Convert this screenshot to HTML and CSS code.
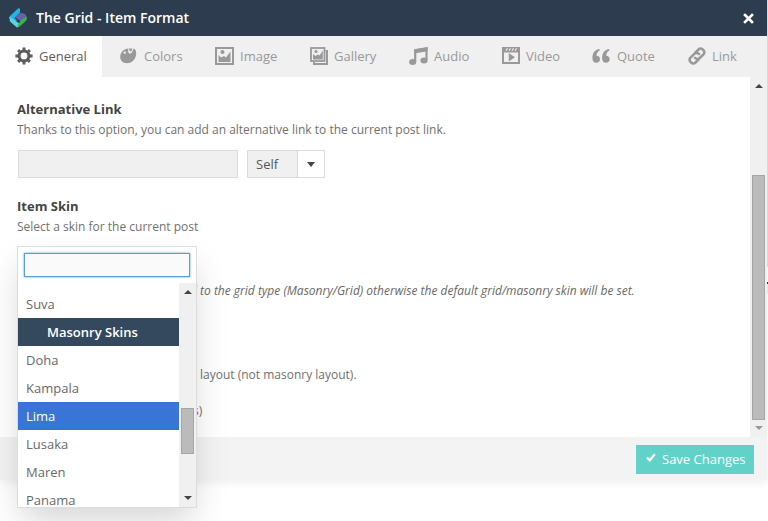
FILE: index.html
```html
<!DOCTYPE html>
<html lang="en">
<head>
<meta charset="utf-8">
<title>The Grid - Item Format</title>
<link rel="stylesheet" href="styles.css">
</head>
<body>
<div class="modal">
  <header class="header">
    <svg class="logo" width="20" height="20" viewBox="0 0 20 20">
      <path d="M10 .4Q12 -.4 12 1.600V4.500L6.500 10L9 12.500L6 15L2 11.500Q.5 9.800 2 8Z" fill="#20b4e8"/>
      <path d="M2 11.500Q.8 10 1.500 8.800L12 16L10.500 19Q9.300 20 8 18.800L2.500 14Q1 12.500 2 11.500Z" fill="#5ad5dc"/>
      <path d="M7.500 9L10.500 6Q12 4.700 14 5L17 6Q19 8 18.500 10L12.500 13Q8 10.500 7.500 9Z" fill="#6661a8"/>
      <path d="M18.700 8.500Q19.500 11 17.800 13L11.500 18.800Q10 19.500 9.500 18L12.500 12.500Z" fill="#35b44b"/>
    </svg>
    <h1 class="title">The Grid - Item Format</h1>
    <svg class="close" width="11" height="11" viewBox="0 0 11 11"><path d="M2 2L9 9M9 2L2 9" stroke="#fff" stroke-width="2.600" stroke-linecap="square"/></svg>
  </header>

  <nav class="tabs">
    <div class="tab active">
      <svg class="icon" width="18" height="18" viewBox="0 0 18 18"><circle cx="9" cy="9" r="4.900" fill="none" stroke="currentColor" stroke-width="3"/><path d="M9 .4V4M9 14V17.600M.4 9H4M14 9H17.600M3.100 3.100L5.200 5.200M12.800 12.800L14.900 14.900M14.900 3.100L12.800 5.200M5.200 12.800L3.100 14.900" stroke="currentColor" stroke-width="2.900"/></svg>
      <span class="t-general">General</span>
    </div>
    <div class="tab tab-colors">
      <svg class="icon" width="18" height="18" viewBox="0 0 18 18"><path d="M8.500 1.500C4 1.500.2 5.500.2 9.800C.2 13.800 3 16.200 6.800 16.200C12.500 16.200 16.200 11.500 16.200 6.500C16.200 4 15.500 2.500 13.800 1.600L11.800 5.600Q10.300 7.500 8.700 6Q7.500 4.300 8.500 1.500Z" fill="currentColor"/><path d="M9 1.500H12.500L11.800 3.500Q10.500 5.500 9.500 3.800Z" fill="currentColor"/><circle cx="4.800" cy="5.600" r="1.200" fill="#f0f0f0"/></svg>
      <span class="t-colors">Colors</span>
    </div>
    <div class="tab tab-image">
      <svg class="icon" width="19" height="18" viewBox="0 0 19 18"><rect x="1" y="1" width="17" height="16" fill="none" stroke="currentColor" stroke-width="2"/><circle cx="7.500" cy="5" r="2" fill="currentColor"/><path d="M3.500 15V8L6 10.500L9 9L11 10.500L15.500 4.500V15Z" fill="currentColor"/></svg>
      <span class="t-image">Image</span>
    </div>
    <div class="tab tab-gallery">
      <svg class="icon" width="18" height="18" viewBox="0 0 18 18"><rect x="1" y="1" width="13.500" height="13" fill="none" stroke="currentColor" stroke-width="1.800"/><circle cx="6" cy="4.500" r="1.600" fill="currentColor"/><path d="M3 12.500V7L5.500 9L8 7.500L9.500 8.500L12.800 3.500V12.500Z" fill="currentColor"/><path d="M4 15V17H17V4H15.500" fill="none" stroke="currentColor" stroke-width="2"/></svg>
      <span class="t-gallery">Gallery</span>
    </div>
    <div class="tab tab-audio">
      <svg class="icon" width="19" height="18" viewBox="0 0 19 18"><path d="M6.200 14.500V3.500L17.500 1.500V13" fill="none" stroke="currentColor" stroke-width="2.200"/><path d="M5.200 2.200L18.600 0V4.200L5.200 6.500Z" fill="currentColor"/><ellipse cx="3.700" cy="15" rx="3.600" ry="3" fill="currentColor"/><ellipse cx="15" cy="13.500" rx="3.600" ry="3" fill="currentColor"/></svg>
      <span class="t-audio">Audio</span>
    </div>
    <div class="tab tab-video">
      <svg class="icon" width="18" height="18" viewBox="0 0 18 18"><path d="M0 0H18V17H0Z" fill="currentColor"/><path d="M2 5.500H16V15H2Z" fill="#f0f0f0"/><path d="M4 3.700L5.500 1.300M7 3.700L8.500 1.300M10 3.700L11.500 1.300M13 3.700L14.500 1.300" stroke="#f0f0f0" stroke-width="1.100"/><path d="M6.800 6L13 10.200L6.800 14.500Z" fill="currentColor"/></svg>
      <span class="t-video">Video</span>
    </div>
    <div class="tab tab-quote">
      <svg class="icon" width="18" height="18" viewBox="0 0 18 18"><path id="q" d="M7.500 2C3 2.500.4 6 .4 11C.4 14 1.800 15.800 4.200 15.800C6.500 15.800 8 14.300 8 12.200C8 10 6.600 8.700 4.500 8.700C4.500 6.500 5.500 4.700 7.700 3.500Z" fill="currentColor"/><use href="#q" x="9.700"/></svg>
      <span class="t-quote">Quote</span>
    </div>
    <div class="tab tab-link">
      <svg class="icon" width="18" height="18" viewBox="0 0 18 18"><g fill="none" stroke="currentColor" stroke-width="2.500" stroke-linecap="round"><path d="M7.500 5.500L10.700 2.300Q12.500.7 14.800 2.500Q17.500 5 15.500 7.300L11.500 11.200Q9.300 12.800 7 10.900"/><path d="M10.500 12.500L7.500 15.500Q5.300 17.500 2.800 15.300Q.5 12.800 2.500 10.500L6.500 6.700Q8.700 5 11 7"/></g></svg>
      <span class="t-link">Link</span>
    </div>
  </nav>

  <main class="body">
    <div class="content">
      <section class="field">
        <h2 class="label">Alternative Link</h2>
        <p class="desc d-alt">Thanks to this option, you can add an alternative link to the current post link.</p>
        <div class="controls">
          <div class="input"></div>
          <div class="select">
            <span class="select-value">Self</span>
            <span class="select-arrow"><i class="down"></i></span>
          </div>
        </div>
      </section>
      <section class="field skin">
        <h2 class="label">Item Skin</h2>
        <p class="desc d-skin">Select a skin for the current post</p>
        <div class="dropdown">
          <div class="search"></div>
          <div class="list">
            <ul class="options">
              <li>Suva</li>
              <li class="group">Masonry Skins</li>
              <li>Doha</li>
              <li>Kampala</li>
              <li class="selected">Lima</li>
              <li>Lusaka</li>
              <li>Maren</li>
              <li>Panama</li>
            </ul>
            <div class="list-scroll"><i class="up"></i><b class="list-thumb"></b><i class="down"></i></div>
          </div>
        </div>
        <p class="note"><span>d to the grid type (Masonry/Grid) otherwise the default grid/masonry skin will be set.</span></p>
        <p class="desc layout-note"><span>layout (not masonry layout).</span></p>
        <p class="desc size-note">s)</p>
      </section>
    </div>
    <div class="scrollbar"><i class="up"></i><b class="thumb"></b><i class="down muted"></i></div>
  </main>

  <footer class="footer">
    <div class="save">
      <svg width="10" height="9" viewBox="0 0 10 9"><path d="M1 4.500L3.800 7.300L8.800 1.200" fill="none" stroke="#fff" stroke-width="2.200"/></svg>
      <span>Save Changes</span>
    </div>
  </footer>
</div>
<div class="page-edge"><span class="edge-line"></span><span class="edge-mark"></span><span class="edge-tail"></span></div>
</body>
</html>
```

FILE: styles.css
```css
* { box-sizing: border-box; }
body {
  margin: 0;
  height: 521px;
  overflow: hidden;
  display: flex;
  background: #fff;
  font-family: "Open Sans", sans-serif;
  font-size: 13px;
  color: #686868;
}
h1, h2, p, ul { margin: 0; padding: 0; }
span { white-space: nowrap; }
.modal {
  width: 767px;
  height: 480px;
  background: #fff;
  box-shadow: 0 2px 10px rgba(0, 0, 0, .07);
}
.header {
  height: 36px;
  display: flex;
  align-items: center;
  padding: 0 13px 0 8px;
  background: #2d3d4f;
}
.title {
  margin-left: 8px;
  font-size: 14px;
  line-height: 36px;
  font-weight: 600;
  color: #fff;
}
.close { margin-left: auto; }
.tabs {
  height: 41px;
  display: flex;
  background: #f0f0f0;
  color: #999;
}
.tab {
  width: 95px;
  flex: none;
  display: flex;
  align-items: center;
  padding: 0 0 1px 16px;
}
.tab .icon { flex: none; margin-right: 6px; }
.tab.active { width: 102px; padding-left: 15px; background: #fff; color: #5c5c5c; }
.tab-colors { width: 97px; padding-left: 18px; }
.tab-image { width: 95px; }
.tab-gallery { width: 99px; }
.tab-audio { width: 93px; }
.tab-video { width: 90px; }
.tab-quote { width: 96px; }
.tab-quote .icon { margin-right: 7px; }
.body { height: 360px; display: flex; }
.content { flex: 1; padding: 23px 17px 0; }
.label {
  font-size: 13px;
  line-height: 18px;
  font-weight: 700;
  color: #444;
}
.desc { font-size: 12px; line-height: 18px; margin-top: 3px; color: #707070; white-space: nowrap; }
.controls { display: flex; gap: 9px; margin: 11px 0 0 1px; }
.input { width: 220px; height: 28px; background: #f0f0f0; border: 1px solid #dcdcdc; }
.select {
  width: 78px;
  height: 28px;
  display: flex;
  border: 1px solid #dcdcdc;
}
.select-value { width: 50px; padding-left: 8px; line-height: 26px; background: #f0f0f0; border-right: 1px solid #dcdcdc; color: #555; }
.select-arrow { flex: 1; display: flex; align-items: center; justify-content: center; }
.up, .down { width: 0; height: 0; border: 4px solid transparent; }
.up { border-top: 0; border-bottom-color: #444; }
.down { border-bottom: 0; border-top-color: #444; }
.down.muted { border-top-color: #999; }
.select .down { border-width: 5px 4px 0; }
.skin { position: relative; margin-top: 19px; }
.dropdown {
  position: absolute;
  z-index: 2;
  left: 0;
  top: 49px;
  width: 180px;
  height: 262px;
  background: #fff;
  border: 1px solid #dcdcdc;
  box-shadow: 0 16px 32px -4px rgba(0, 0, 0, .17);
}
.search {
  width: 166px;
  height: 24px;
  margin: 6px;
  background: #fafafa;
  border: 1px solid #5b9dd9;
  box-shadow: 0 0 2px rgba(30, 140, 190, .8);
}
.list { height: 224px; display: flex; overflow: hidden; }
.options { flex: 1; list-style: none; padding-top: 7px; }
.options li { height: 28px; line-height: 28px; padding-left: 8px; color: #686868; }
.options .group { padding-left: 29px; background: #34495e; color: #fff; font-weight: 600; }
.options .selected { background: #3875d7; color: #fff; }
.list-scroll {
  width: 17px;
  display: flex;
  flex-direction: column;
  align-items: center;
  padding: 7px 0 7px;
  background: #f0f0f0;
}
.list-thumb { width: 13px; height: 46px; margin: 114px 0 auto; background: #bbb; border: 1px solid #a6a6a6; }
.note { margin: 46px 0 0 173px; font-size: 12px; line-height: 18px; font-style: italic; color: #686868; }
.layout-note { margin: 66px 0 0 183px; }
.size-note { margin: 18px 0 0 176px; }
.scrollbar {
  width: 17px;
  display: flex;
  flex-direction: column;
  align-items: center;
  padding: 7px 0 7px;
  background: #f0f0f0;
}
.thumb { width: 13px; height: 245px; margin: 87px 0 auto; background: #bbb; border: 1px solid #a6a6a6; }
.footer {
  height: 43px;
  display: flex;
  justify-content: flex-end;
  padding: 8px 13px 0 0;
  background: #f3f3f3;
}
.save {
  width: 118px;
  height: 29px;
  display: flex;
  align-items: center;
  padding: 0 0 1px 10px;
  gap: 6px;
  background: #62d1c8;
  color: #fff;
}
.save svg { flex: none; margin-bottom: 3px; }
.page-edge { width: 1px; display: flex; flex-direction: column; }
.edge-line { height: 267px; background: #d8d8d8; }
.edge-mark { height: 2px; margin-top: 15px; background: #333; }
.edge-tail { height: 10px; background: #e6e6e6; }
```
